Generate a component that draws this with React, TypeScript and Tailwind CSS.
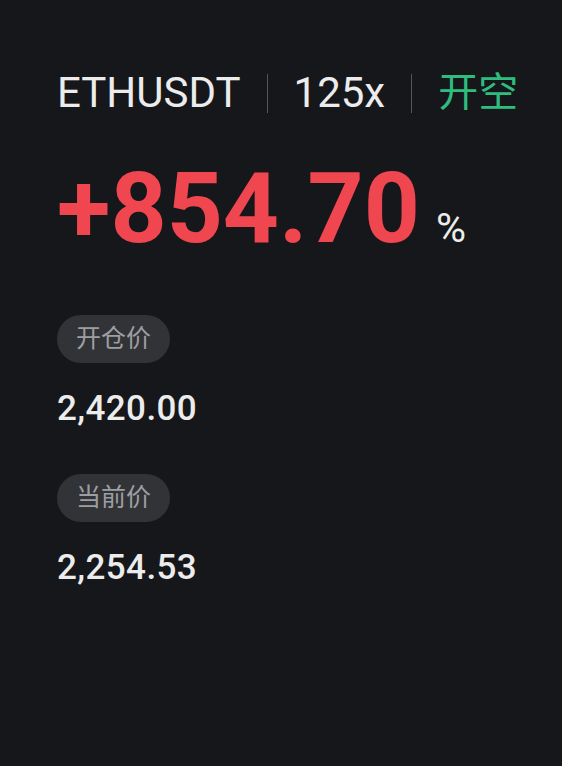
export default function App() {
  const font = { fontFamily: 'Roboto, "Noto Sans CJK SC", sans-serif' };
  return (
    <div className="min-h-[766px] w-[562px] bg-[#16171b] pl-[57px] pt-[72px]" style={font}>
      <div className="flex items-center gap-[26px] text-[42px] leading-none">
        <span className="text-[#ececec]">ETHUSDT</span>
        <span className="h-[39px] w-px bg-[#55565a]" />
        <span className="text-[#ececec]">125x</span>
        <span className="h-[39px] w-px bg-[#55565a]" />
        <span className="text-[40px] text-[#2ebd7f]">开空</span>
      </div>

      <div className="mt-[46px] flex items-baseline leading-none">
        <span className="text-[98px] font-bold text-[#f0464f]">+854.70</span>
        <span className="ml-[16px] text-[41px] text-[#ececec]">%</span>
      </div>

      <div className="mt-[57px] flex flex-col items-start">
        <span className="h-[48px] rounded-full bg-[#323337] px-[19px] text-[25px] leading-[48px] text-[#9d9ea2]">开仓价</span>
        <span className="mt-[28px] text-[35px] font-medium leading-none tracking-[0.4px] text-[#ececec]">2,420.00</span>
        <span className="mt-[48px] h-[48px] rounded-full bg-[#323337] px-[19px] text-[25px] leading-[48px] text-[#9d9ea2]">当前价</span>
        <span className="mt-[28px] text-[35px] font-medium leading-none tracking-[0.4px] text-[#ececec]">2,254.53</span>
      </div>
    </div>
  );
}
